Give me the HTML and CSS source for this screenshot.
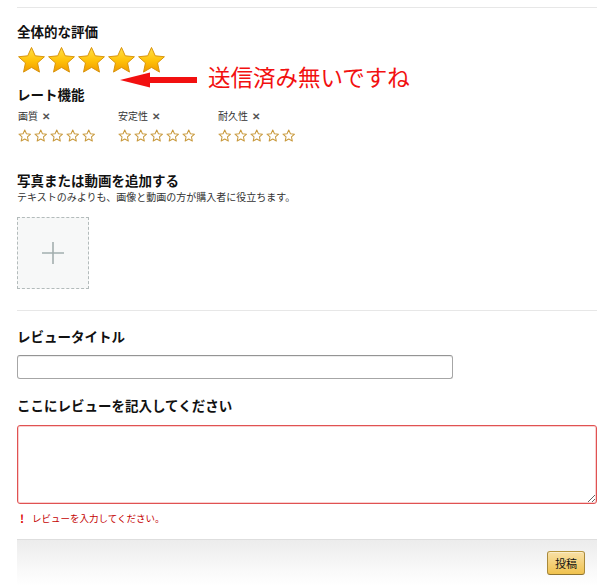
FILE: index.html
```html
<!DOCTYPE html>
<html lang="ja">
<head>
<meta charset="utf-8">
<title>レビュー</title>
<link rel="stylesheet" href="styles.css">
</head>
<body>
<div class="page">
  <hr class="rule first">

  <h2 class="title t-overall">全体的な評価</h2>
  <div class="big-stars">
    <svg class="big-star" viewBox="0 0 24 24"><defs><linearGradient id="gold" x1="0" y1="0" x2="0" y2="1"><stop offset="0" stop-color="#ffe04a"/><stop offset="0.55" stop-color="#ffc107"/><stop offset="1" stop-color="#f09a00"/></linearGradient></defs><polygon points="12,1.2 15.1,8.1 22.7,8.9 17,14 18.6,21.6 12,17.7 5.4,21.6 7,14 1.3,8.9 8.9,8.1" fill="url(#gold)" stroke="#d8920a" stroke-width="0.8" stroke-linejoin="round"/></svg>
    <svg class="big-star" viewBox="0 0 24 24"><polygon points="12,1.2 15.1,8.1 22.7,8.9 17,14 18.6,21.6 12,17.7 5.4,21.6 7,14 1.3,8.9 8.9,8.1" fill="url(#gold)" stroke="#d8920a" stroke-width="0.8" stroke-linejoin="round"/></svg>
    <svg class="big-star" viewBox="0 0 24 24"><polygon points="12,1.2 15.1,8.1 22.7,8.9 17,14 18.6,21.6 12,17.7 5.4,21.6 7,14 1.3,8.9 8.9,8.1" fill="url(#gold)" stroke="#d8920a" stroke-width="0.8" stroke-linejoin="round"/></svg>
    <svg class="big-star" viewBox="0 0 24 24"><polygon points="12,1.2 15.1,8.1 22.7,8.9 17,14 18.6,21.6 12,17.7 5.4,21.6 7,14 1.3,8.9 8.9,8.1" fill="url(#gold)" stroke="#d8920a" stroke-width="0.8" stroke-linejoin="round"/></svg>
    <svg class="big-star" viewBox="0 0 24 24"><polygon points="12,1.2 15.1,8.1 22.7,8.9 17,14 18.6,21.6 12,17.7 5.4,21.6 7,14 1.3,8.9 8.9,8.1" fill="url(#gold)" stroke="#d8920a" stroke-width="0.8" stroke-linejoin="round"/></svg>
  </div>

  <div class="note">
    <svg class="note-arrow" viewBox="0 0 78 16"><polygon points="0,8 30,0.5 30,5 77,5 77,11 30,11 30,15.5" fill="#f21010"/></svg>
    <span class="note-text">送信済み無いですね</span>
  </div>

  <h2 class="title t-rate">レート機能</h2>
  <div class="rate-grid">
    <div class="rate-item">
      <div class="rate-label">画質 <span class="x">✕</span></div>
      <div class="small-stars">
        <svg class="small-star" viewBox="0 0 24 24"><polygon points="12,1.8 15,8.5 22.3,9.2 16.8,14.1 18.4,21.4 12,17.7 5.6,21.4 7.2,14.1 1.7,9.2 9,8.5" fill="#fff" stroke="#c99a3e" stroke-width="1.8" stroke-linejoin="round"/></svg>
        <svg class="small-star" viewBox="0 0 24 24"><polygon points="12,1.8 15,8.5 22.3,9.2 16.8,14.1 18.4,21.4 12,17.7 5.6,21.4 7.2,14.1 1.7,9.2 9,8.5" fill="#fff" stroke="#c99a3e" stroke-width="1.8" stroke-linejoin="round"/></svg>
        <svg class="small-star" viewBox="0 0 24 24"><polygon points="12,1.8 15,8.5 22.3,9.2 16.8,14.1 18.4,21.4 12,17.7 5.6,21.4 7.2,14.1 1.7,9.2 9,8.5" fill="#fff" stroke="#c99a3e" stroke-width="1.8" stroke-linejoin="round"/></svg>
        <svg class="small-star" viewBox="0 0 24 24"><polygon points="12,1.8 15,8.5 22.3,9.2 16.8,14.1 18.4,21.4 12,17.7 5.6,21.4 7.2,14.1 1.7,9.2 9,8.5" fill="#fff" stroke="#c99a3e" stroke-width="1.8" stroke-linejoin="round"/></svg>
        <svg class="small-star" viewBox="0 0 24 24"><polygon points="12,1.8 15,8.5 22.3,9.2 16.8,14.1 18.4,21.4 12,17.7 5.6,21.4 7.2,14.1 1.7,9.2 9,8.5" fill="#fff" stroke="#c99a3e" stroke-width="1.8" stroke-linejoin="round"/></svg>
      </div>
    </div>
    <div class="rate-item">
      <div class="rate-label">安定性 <span class="x">✕</span></div>
      <div class="small-stars">
        <svg class="small-star" viewBox="0 0 24 24"><polygon points="12,1.8 15,8.5 22.3,9.2 16.8,14.1 18.4,21.4 12,17.7 5.6,21.4 7.2,14.1 1.7,9.2 9,8.5" fill="#fff" stroke="#c99a3e" stroke-width="1.8" stroke-linejoin="round"/></svg>
        <svg class="small-star" viewBox="0 0 24 24"><polygon points="12,1.8 15,8.5 22.3,9.2 16.8,14.1 18.4,21.4 12,17.7 5.6,21.4 7.2,14.1 1.7,9.2 9,8.5" fill="#fff" stroke="#c99a3e" stroke-width="1.8" stroke-linejoin="round"/></svg>
        <svg class="small-star" viewBox="0 0 24 24"><polygon points="12,1.8 15,8.5 22.3,9.2 16.8,14.1 18.4,21.4 12,17.7 5.6,21.4 7.2,14.1 1.7,9.2 9,8.5" fill="#fff" stroke="#c99a3e" stroke-width="1.8" stroke-linejoin="round"/></svg>
        <svg class="small-star" viewBox="0 0 24 24"><polygon points="12,1.8 15,8.5 22.3,9.2 16.8,14.1 18.4,21.4 12,17.7 5.6,21.4 7.2,14.1 1.7,9.2 9,8.5" fill="#fff" stroke="#c99a3e" stroke-width="1.8" stroke-linejoin="round"/></svg>
        <svg class="small-star" viewBox="0 0 24 24"><polygon points="12,1.8 15,8.5 22.3,9.2 16.8,14.1 18.4,21.4 12,17.7 5.6,21.4 7.2,14.1 1.7,9.2 9,8.5" fill="#fff" stroke="#c99a3e" stroke-width="1.8" stroke-linejoin="round"/></svg>
      </div>
    </div>
    <div class="rate-item">
      <div class="rate-label">耐久性 <span class="x">✕</span></div>
      <div class="small-stars">
        <svg class="small-star" viewBox="0 0 24 24"><polygon points="12,1.8 15,8.5 22.3,9.2 16.8,14.1 18.4,21.4 12,17.7 5.6,21.4 7.2,14.1 1.7,9.2 9,8.5" fill="#fff" stroke="#c99a3e" stroke-width="1.8" stroke-linejoin="round"/></svg>
        <svg class="small-star" viewBox="0 0 24 24"><polygon points="12,1.8 15,8.5 22.3,9.2 16.8,14.1 18.4,21.4 12,17.7 5.6,21.4 7.2,14.1 1.7,9.2 9,8.5" fill="#fff" stroke="#c99a3e" stroke-width="1.8" stroke-linejoin="round"/></svg>
        <svg class="small-star" viewBox="0 0 24 24"><polygon points="12,1.8 15,8.5 22.3,9.2 16.8,14.1 18.4,21.4 12,17.7 5.6,21.4 7.2,14.1 1.7,9.2 9,8.5" fill="#fff" stroke="#c99a3e" stroke-width="1.8" stroke-linejoin="round"/></svg>
        <svg class="small-star" viewBox="0 0 24 24"><polygon points="12,1.8 15,8.5 22.3,9.2 16.8,14.1 18.4,21.4 12,17.7 5.6,21.4 7.2,14.1 1.7,9.2 9,8.5" fill="#fff" stroke="#c99a3e" stroke-width="1.8" stroke-linejoin="round"/></svg>
        <svg class="small-star" viewBox="0 0 24 24"><polygon points="12,1.8 15,8.5 22.3,9.2 16.8,14.1 18.4,21.4 12,17.7 5.6,21.4 7.2,14.1 1.7,9.2 9,8.5" fill="#fff" stroke="#c99a3e" stroke-width="1.8" stroke-linejoin="round"/></svg>
      </div>
    </div>
  </div>

  <h2 class="title t-media">写真または動画を追加する</h2>
  <p class="hint">テキストのみよりも、画像と動画の方が購入者に役立ちます。</p>
  <div class="upload">
    <svg class="plus" viewBox="0 0 22 22"><path d="M11 0V22M0 11H22" stroke="#a3aeae" stroke-width="1.6"/></svg>
  </div>

  <hr class="rule second">

  <h2 class="title t-headline">レビュータイトル</h2>
  <input class="text-input" type="text">

  <h2 class="title t-body">ここにレビューを記入してください</h2>
  <textarea class="text-area"></textarea>
  <p class="error"><span class="bang">!</span>レビューを入力してください。</p>

  <div class="footer">
    <button class="submit" type="button">投稿</button>
  </div>
</div>
</body>
</html>
```

FILE: styles.css
```css
html, body {
  margin: 0;
  padding: 0;
  background: #fff;
}

body {
  font-family: "Noto Sans CJK JP", "Noto Sans", "Liberation Sans", sans-serif;
  color: #111;
}

.page {
  position: relative;
  width: 580px;
  padding: 7px 0 0 17px;
}

.rule {
  margin: 0;
  border: 0;
  border-top: 1px solid #e7e7e7;
  height: 0;
}

.rule.second {
  margin-top: 21px;
}

.title {
  margin: 0;
  font-size: 13.5px;
  line-height: 18px;
  font-weight: 700;
  color: #111;
}

.t-overall { margin-top: 14px; }
.t-rate { margin-top: 10px; }
.t-media { margin-top: 28px; }
.t-headline { margin-top: 16px; }
.t-body { margin-top: 17px; }

.big-stars {
  display: flex;
  gap: 1px;
  margin-top: 6px;
  height: 29px;
}

.big-star {
  width: 29px;
  height: 29px;
  display: block;
}

.note {
  position: absolute;
  left: 120px;
  top: 62px;
  display: flex;
  align-items: center;
}

.note-arrow {
  width: 78px;
  height: 16px;
  display: block;
  margin-top: 7px;
}

.note-text {
  margin-left: 10px;
  font-size: 22.5px;
  line-height: 28px;
  font-weight: 400;
  color: #f21010;
}

.rate-grid {
  display: grid;
  grid-template-columns: 100px 100px 100px;
  margin-top: 6px;
  padding-left: 1px;
}

.rate-label {
  font-size: 10px;
  line-height: 14px;
  color: #333;
}

.rate-label .x {
  margin-left: 2px;
  font-size: 10px;
  font-weight: 700;
  color: #555;
}

.small-stars {
  display: flex;
  gap: 2.5px;
  margin-top: 6px;
}

.small-star {
  width: 13.5px;
  height: 13.5px;
  display: block;
}

.hint {
  margin: 1px 0 0;
  font-size: 10px;
  line-height: 14px;
  color: #333;
}

.upload {
  margin-top: 13px;
  width: 72px;
  height: 72px;
  box-sizing: border-box;
  border: 1.5px dashed #b3bbbb;
  background: #f7f8f8;
  display: flex;
  align-items: center;
  justify-content: center;
}

.plus {
  width: 22px;
  height: 22px;
  display: block;
}

.text-input {
  display: block;
  margin-top: 10px;
  width: 436px;
  height: 24px;
  box-sizing: border-box;
  padding: 3px 7px;
  border: 1px solid #a6a6a6;
  border-top-color: #949494;
  border-radius: 3px;
  box-shadow: 0 1px 0 rgba(255,255,255,.5), 0 1px 0 rgba(0,0,0,.07) inset;
  font-family: inherit;
  font-size: 12px;
  outline: none;
  background: #fff;
}

.text-area {
  display: block;
  margin-top: 11px;
  width: 580px;
  height: 79px;
  box-sizing: border-box;
  border: 1px solid #e05252;
  border-radius: 3px;
  box-shadow: 0 0 0 1px #f9d0d0 inset;
  padding: 5px 8px;
  font-family: inherit;
  font-size: 12px;
  outline: none;
  background: #fff;
}

.error {
  margin: 7px 0 0;
  font-size: 9.5px;
  line-height: 14px;
  color: #c40000;
  display: flex;
  align-items: center;
}

.bang {
  display: inline-block;
  width: 12px;
  margin-left: 3px;
  font-size: 11px;
  font-weight: 700;
  color: #d00;
}

.footer {
  margin-top: 14px;
  height: 47px;
  box-sizing: border-box;
  border-top: 1px solid #dedede;
  background: linear-gradient(to bottom, #ececec, #fafafa 70%, #fff);
  display: flex;
  justify-content: flex-end;
  align-items: flex-start;
  padding: 11px 12px 0 0;
}

.submit {
  width: 38px;
  height: 24px;
  padding: 0;
  border: 1px solid;
  border-color: #b7963c #a8893a #8e7330;
  border-radius: 3px;
  background: linear-gradient(to bottom, #f8e0a6, #f0c24e);
  box-shadow: 0 1px 0 rgba(255,255,255,.4) inset;
  font-family: inherit;
  font-size: 11px;
  color: #111;
}
```
